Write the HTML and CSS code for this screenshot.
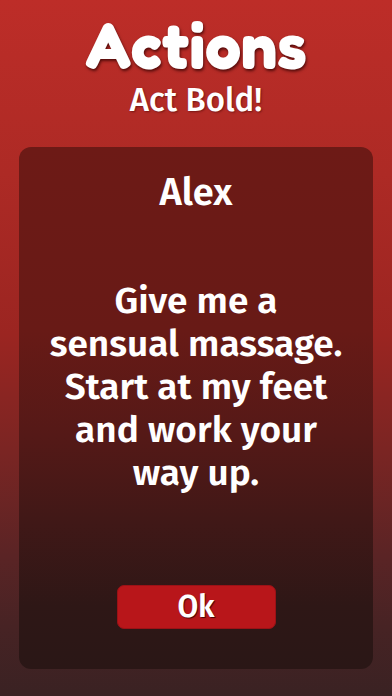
FILE: index.html
```html
<!DOCTYPE html>
<html>
<head>
<meta charset="utf-8">
<link rel="stylesheet" href="styles.css">
</head>
<body>
<div class="screen">
  <header class="header">
    <h1 class="title">Actions</h1>
    <p class="subtitle">Act Bold!</p>
  </header>
  <main class="card">
    <h2 class="name">Alex</h2>
    <p class="message">Give me a<br>sensual massage.<br>Start at my feet<br>and work your<br>way up.</p>
    <button class="ok">Ok</button>
  </main>
</div>
</body>
</html>
```
FILE: styles.css
```css
html, body {
  margin: 0;
  padding: 0;
}
body {
  width: 392px;
  height: 696px;
  overflow: hidden;
  font-family: "Fira Sans", "Fira Sans Condensed", "DejaVu Sans Condensed", Roboto, sans-serif;
  color: #fff;
}
.screen {
  height: 696px;
  box-sizing: border-box;
  background: linear-gradient(to bottom, #bd2d28 0%, #ad2a25 25%, #9b2521 48%, #7a2523 65%, #5a2425 80%, #472324 90%, #3a2223 100%);
  display: flex;
  flex-direction: column;
  align-items: center;
  padding: 10px 19px 27px;
}
.header {
  text-align: center;
  height: 137px;
}
.title {
  margin: 0;
  font-family: "Fredoka One", "Fredoka", "Varela Round", "Nunito", "Open Sans", "Noto Sans", sans-serif;
  font-weight: 700;
  font-size: 64px;
  line-height: 70px;
  letter-spacing: 0;
  text-shadow: 1px 2px 3px rgba(50, 0, 0, 0.75);
}
.subtitle {
  margin: 1px 0 0;
  font-weight: 500;
  font-size: 33px;
  line-height: 38px;
  text-shadow: 1px 1px 2px rgba(60, 0, 0, 0.5);
}
.card {
  align-self: stretch;
  flex: 1;
  border-radius: 12px;
  background: linear-gradient(to bottom, #6d1a16 0%, #681a16 35%, #551917 55%, #401817 72%, #2e1716 88%, #2a1716 100%);
  display: flex;
  flex-direction: column;
  align-items: center;
  padding: 21px 20px 40px;
}
.name {
  margin: 0;
  font-weight: 600;
  font-size: 38px;
  line-height: 48px;
}
.message {
  margin: 63px 0 0;
  text-align: center;
  font-weight: 600;
  font-size: 37px;
  line-height: 43px;
}
.ok {
  margin-top: auto;
  width: 159px;
  height: 44px;
  border: 1px solid #9a1216;
  border-radius: 7px;
  background: #b8161a;
  color: #fff;
  font-family: inherit;
  font-weight: 600;
  font-size: 30px;
  line-height: 40px;
  padding: 0;
  text-shadow: 1px 1px 1px rgba(40, 0, 0, 0.8);
}
```
